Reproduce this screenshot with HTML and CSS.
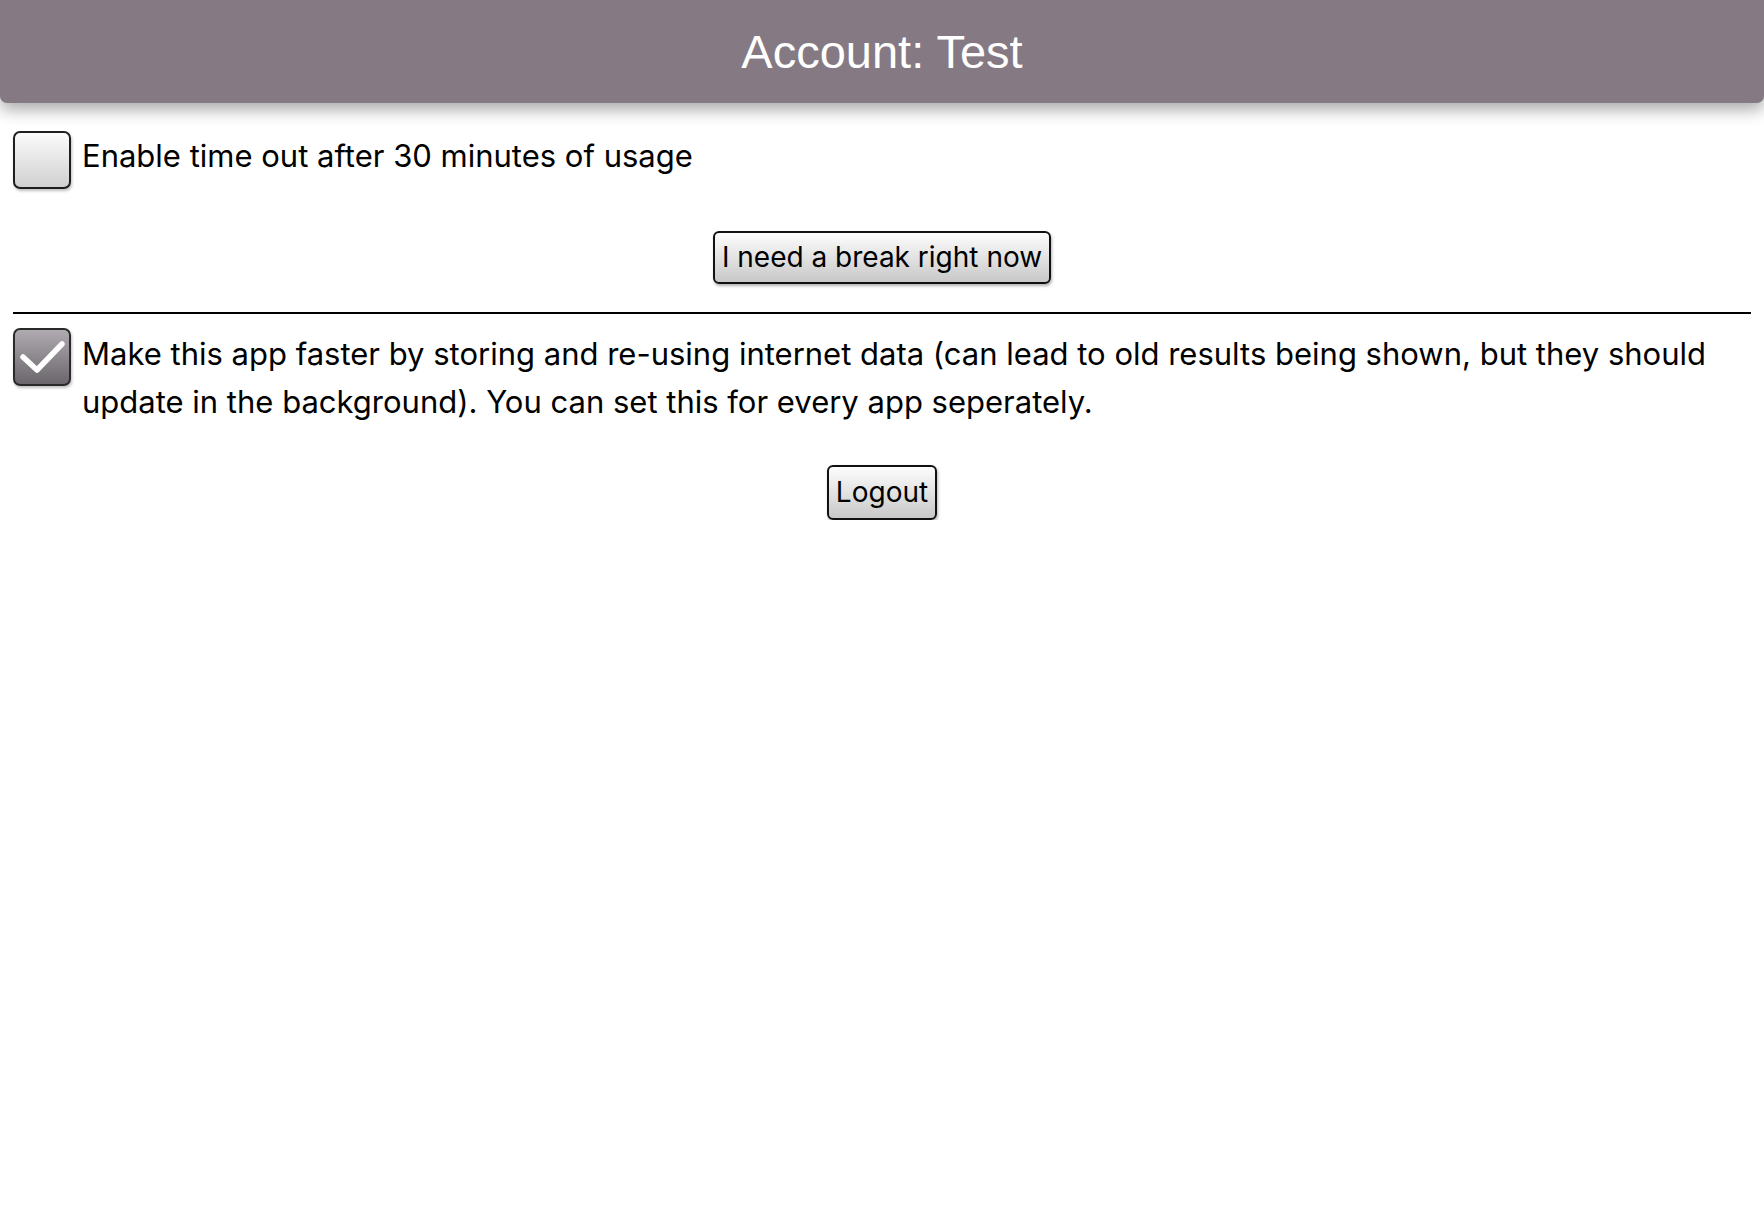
FILE: index.html
```html
<!DOCTYPE html>
<html lang="en">
<head>
<meta charset="utf-8">
<title>Account</title>
<link rel="stylesheet" href="styles.css">
</head>
<body>
<header class="topbar"><h1 class="title">Account: Test</h1></header>
<main class="content">
  <label class="option first">
    <span class="box"></span>
    <span class="label-text">Enable time out after 30 minutes of usage</span>
  </label>
  <div class="center break-row"><button class="btn">I need a break right now</button></div>
  <hr class="rule">
  <label class="option second">
    <span class="box checked"><svg class="tick" viewBox="0 0 54 54" width="54" height="54"><path d="M8 27 L22 40 L47 14" fill="none" stroke="#fff" stroke-width="5.5" stroke-linecap="round" stroke-linejoin="round"/></svg></span>
    <span class="label-text">Make this app faster by storing and re-using internet data (can lead to old results being shown, but they should update in the background). You can set this for every app seperately.</span>
  </label>
  <div class="center logout-row"><button class="btn">Logout</button></div>
</main>
</body>
</html>
```
FILE: styles.css
```css
html, body { margin: 0; padding: 0; background: #fff; }
body { font-family: Inter, "Noto Sans", sans-serif; color: #000; font-size: 31px; }
.topbar {
  height: 103px;
  background: #857a83;
  border-radius: 0 0 7px 7px;
  box-shadow: 0 7px 16px rgba(0,0,0,0.33);
  display: flex; align-items: center; justify-content: center;
}
.title {
  margin: 0;
  font-family: "Liberation Sans", Arial, sans-serif;
  font-weight: normal; font-size: 47px; color: #fff;
}
.content { padding: 0 13px; }
.option { display: flex; align-items: flex-start; gap: 11px; }
.option.first { margin-top: 28px; }
.box {
  flex: 0 0 auto;
  width: 54px; height: 54px;
  border: 2px solid #1e1e1e; border-radius: 7px;
  background: linear-gradient(#fbfbfb, #d0d0d0);
  box-shadow: 1px 2px 3px rgba(0,0,0,0.25);
  display: flex; align-items: center; justify-content: center;
}
.box.checked { background: linear-gradient(#b0abb1, #6b666c); border-color: #2a2a2a; }
.tick { display: block; }
.label-text { line-height: 48px; padding-top: 1px; }
.second .label-text { padding-top: 2px; }
.center { display: flex; justify-content: center; }
.break-row { margin-top: 42px; }
.btn {
  font-family: Inter, "Noto Sans", sans-serif; font-size: 28px; color: #000;
  border: 2px solid #111; border-radius: 6px;
  background: linear-gradient(#fdfdfd, #c8c8c8);
  box-shadow: 1px 2px 3px rgba(0,0,0,0.3);
  padding: 0 7px; height: 53px; line-height: 49px;
}
.logout-row { margin-top: 39px; }
.logout-row .btn { height: 55px; }
.rule { border: 0; border-top: 2px solid #000; margin: 28px 0 14px; }
```
